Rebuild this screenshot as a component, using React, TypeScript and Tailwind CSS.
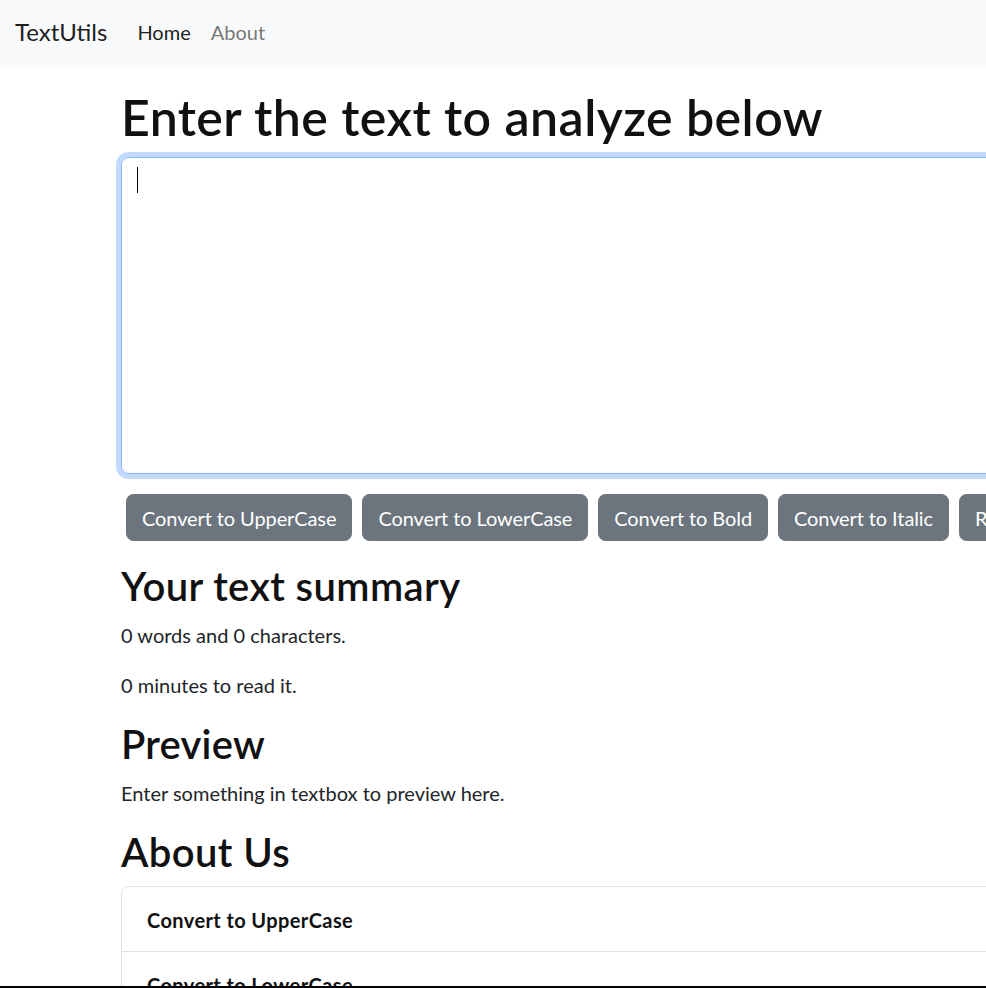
export default function App() {
  const buttons = [
    "Convert to UpperCase",
    "Convert to LowerCase",
    "Convert to Bold",
    "Convert to Italic",
    "Remove Extra Spaces",
  ];
  return (
    <div
      className="w-[986px] h-[988px] overflow-hidden bg-white border-b-2 border-black text-[#212529]"
      style={{ fontFamily: "Lato, sans-serif" }}
    >
      <nav className="h-[67px] bg-[#f8f9fa] flex items-center pl-[15px] pb-[3px]">
        <span className="text-[24px] leading-[36px] text-black/90 mr-[20px]">TextUtils</span>
        <ul className="flex items-center text-[20px] leading-[30px]">
          <li className="px-[10px] text-black/90">Home</li>
          <li className="px-[10px] text-black/55">About</li>
        </ul>
      </nav>

      <main className="pl-[121px] w-[1300px] pt-[20px]">
        <h1 className="text-[50px] leading-[60px] font-semibold mb-[10px] tracking-[0.45px] text-[#111]">
          Enter the text to analyze below
        </h1>
        <div className="relative">
          <textarea
            className="block w-full h-[317px] border border-[#86b7fe] rounded-[7.5px] shadow-[0_0_0_5px_rgba(13,110,253,0.25)] outline-none resize-none px-[15px] py-[7.5px] text-[20px] leading-[30px]"
            defaultValue=""
          />
          <span className="absolute left-[16px] top-[10px] w-px h-[26px] bg-black" />
        </div>

        <div className="flex flex-nowrap mt-[20px]">
          {buttons.map((b) => (
            <button
              key={b}
              className="shrink-0 mx-[5px] bg-[#6c757d] border border-[#6c757d] text-white rounded-[7.5px] px-[15px] py-[7.5px] text-[20px] leading-[30px] tracking-[-0.1px] whitespace-nowrap"
            >
              {b}
            </button>
          ))}
        </div>

        <section className="mt-[21px]">
          <h2 className="text-[40px] leading-[48px] font-semibold mb-[10px] tracking-[0.4px] text-[#111]">Your text summary</h2>
          <p className="text-[20px] leading-[30px] mb-[20px]">0 words and 0 characters.</p>
          <p className="text-[20px] leading-[30px] mb-[20px]">0 minutes to read it.</p>
          <h2 className="text-[40px] leading-[48px] font-semibold mb-[10px] tracking-[0.2px] text-[#111]">Preview</h2>
          <p className="text-[20px] leading-[30px] mb-[20px]">Enter something in textbox to preview here.</p>
        </section>

        <section>
          <h2 className="text-[40px] leading-[48px] font-semibold mb-[10px] tracking-[0.4px] text-[#111]">About Us</h2>
          <div className="border border-[#dee2e6] rounded-[7.5px]">
            <div className="h-[65px] flex items-center px-[25px] pt-[2px] text-[20px] leading-[30px] font-bold tracking-[0.4px] text-[#111] border-b border-[#dee2e6]">
              Convert to UpperCase
            </div>
            <div className="h-[65px] flex items-center px-[25px] pt-[2px] text-[20px] leading-[30px] font-bold tracking-[0.4px] text-[#111] border-b border-[#dee2e6]">
              Convert to LowerCase
            </div>
            <div className="h-[65px] flex items-center px-[25px] pt-[2px] text-[20px] leading-[30px] font-bold tracking-[0.4px] text-[#111]">
              Convert to Bold
            </div>
          </div>
        </section>
      </main>
    </div>
  );
}
